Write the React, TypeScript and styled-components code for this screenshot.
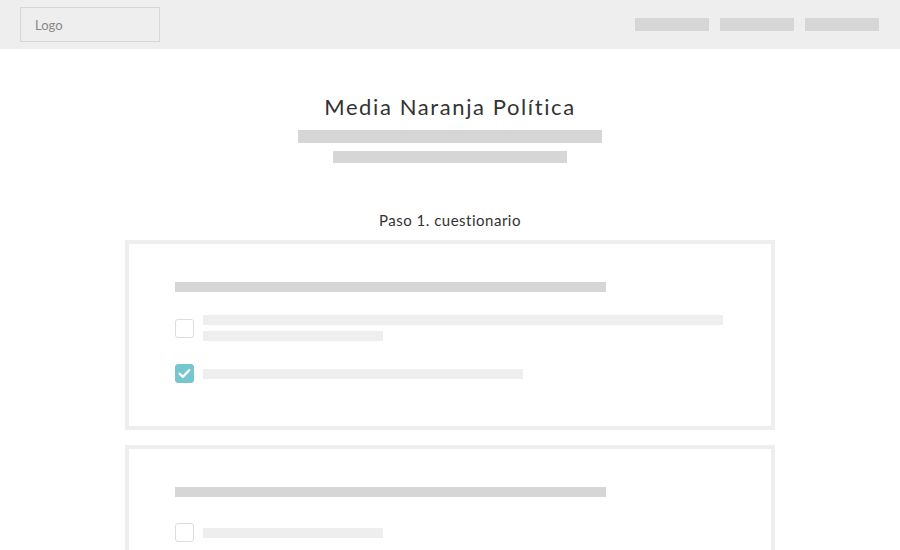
import React from 'react';
import styled, { createGlobalStyle } from 'styled-components';

const GlobalStyle = createGlobalStyle`
  html, body {
    margin: 0;
    padding: 0;
    background: #ffffff;
  }
  body {
    font-family: 'Lato', 'Open Sans', sans-serif;
    color: #333333;
    overflow: hidden;
  }
`

const Header = styled.header`
  height: 49px;
  background: #eeeeee;
  display: flex;
  align-items: center;
  justify-content: space-between;
  padding: 0 21px 0 20px;
  box-sizing: border-box;
`

const LogoBox = styled.div`
  width: 140px;
  height: 35px;
  box-sizing: border-box;
  border: 1px solid #d6d6d6;
  display: flex;
  align-items: center;
  padding-left: 14px;
  font-size: 13px;
  color: #888888;
`

const Nav = styled.nav`
  display: flex;
  gap: 11px;
`

const NavItem = styled.div`
  width: 74px;
  height: 13px;
  background: #d6d6d6;
`

const Main = styled.main`
  display: flex;
  flex-direction: column;
  align-items: center;
`

const Title = styled.h1`
  margin: 45px 0 0;
  font-size: 22px;
  line-height: 26px;
  font-weight: 400;
  letter-spacing: 1.6px;
  color: #333333;
`

const Placeholder = styled.div<{ $w: number; $h?: number; $dark?: boolean }>`
  width: ${p => p.$w}px;
  height: ${p => p.$h ?? 10}px;
  background: ${p => (p.$dark ? '#d6d6d6' : '#eeeeee')};
  flex-shrink: 0;
`

const Lead = styled.div`
  display: flex;
  flex-direction: column;
  align-items: center;
  gap: 8px;
  margin-top: 10px;
`

const Step = styled.h2`
  margin: 47px 0 0;
  font-size: 15px;
  line-height: 20px;
  font-weight: 400;
  letter-spacing: 0.5px;
  color: #333333;
`

const Cards = styled.div`
  margin-top: 10px;
  width: 650px;
  display: flex;
  flex-direction: column;
  gap: 15px;
`

const Card = styled.section`
  border: 4px solid #eeeeee;
  padding: 38px 46px 40px;
  display: flex;
  flex-direction: column;
`

const Options = styled.div`
  margin-top: 23px;
  display: flex;
  flex-direction: column;
  gap: 20px;
`

const OptionRow = styled.div`
  display: flex;
  align-items: center;
  gap: 9px;
`

const Check = styled.span<{ $checked?: boolean }>`
  width: 19px;
  height: 19px;
  margin: 3px 0;
  box-sizing: border-box;
  border-radius: 3px;
  border: 1px solid ${p => (p.$checked ? '#76c6d0' : '#dddddd')};
  background: ${p => (p.$checked ? '#76c6d0' : '#ffffff')};
  display: flex;
  align-items: center;
  justify-content: center;
  flex-shrink: 0;
`

const Lines = styled.div`
  display: flex;
  flex-direction: column;
  gap: 6px;
`

type Option = { lines: number[]; checked?: boolean }

const questions: { options: Option[] }[] = [
  { options: [{ lines: [520, 180] }, { lines: [320], checked: true }] },
  { options: [{ lines: [180] }, { lines: [320] }] },
]

function CheckMark() {
  return (
    <svg width="13" height="11" viewBox="0 0 13 11" fill="none">
      <path d="M1.8 5.8 L5 8.8 L11.2 2.2" stroke="#ffffff" strokeWidth="2.4" strokeLinecap="round" strokeLinejoin="round" />
    </svg>
  )
}

export default function App() {
  return (
    <>
      <GlobalStyle />
      <Header>
        <LogoBox>Logo</LogoBox>
        <Nav>
          <NavItem />
          <NavItem />
          <NavItem />
        </Nav>
      </Header>
      <Main>
        <Title>Media Naranja Política</Title>
        <Lead>
          <Placeholder $w={304} $h={13} $dark />
          <Placeholder $w={234} $h={12} $dark />
        </Lead>
        <Step>Paso 1. cuestionario</Step>
        <Cards>
          {questions.map((q, i) => (
            <Card key={i}>
              <Placeholder $w={431} $dark />
              <Options>
                {q.options.map((o, j) => (
                  <OptionRow key={j}>
                    <Check $checked={o.checked}>{o.checked && <CheckMark />}</Check>
                    <Lines>
                      {o.lines.map((w, k) => (
                        <Placeholder key={k} $w={w} />
                      ))}
                    </Lines>
                  </OptionRow>
                ))}
              </Options>
            </Card>
          ))}
        </Cards>
      </Main>
    </>
  )
}
